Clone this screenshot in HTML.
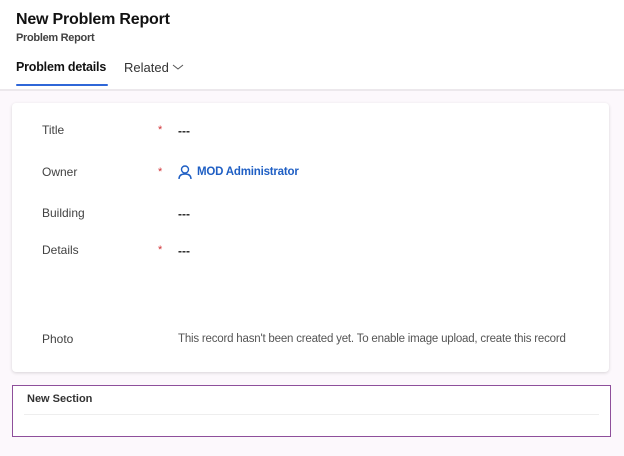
<!DOCTYPE html>
<html><head><style>
body{margin:0;width:624px;height:456px;background:#fcf8fc;font-family:"Liberation Sans",sans-serif;position:relative;overflow:hidden;color:#242424}
.hdr{position:absolute;left:0;top:0;width:624px;height:89px;background:#fff;border-bottom:2px solid #ece8ec}
.a{position:absolute;white-space:nowrap}
.lbl{font-size:12px;color:#424242}
.star{color:#d13438;font-size:11px}
.val{font-size:12px;font-weight:bold;color:#242424}
</style></head><body>
<div class="hdr"></div>
<div class="a" style="left:16px;top:11px;font-size:16px;font-weight:bold;color:#111;letter-spacing:-0.2px">New Problem Report</div>
<div class="a" style="left:16px;top:32px;font-size:11px;font-weight:bold;color:#424242;letter-spacing:-0.3px">Problem Report</div>
<div class="a" style="left:16px;top:60px;font-size:12.5px;font-weight:bold;color:#111;letter-spacing:-0.2px">Problem details</div>
<div class="a" style="left:16px;top:84px;width:92px;height:2px;background:#2f67d8;border-radius:1px"></div>
<div class="a" style="left:124px;top:60px;font-size:13px;color:#333">Related</div>
<svg class="a" style="left:172px;top:63px" width="12" height="8"><path d="M1 2l5 4 5-4" stroke="#555" fill="none"/></svg>
<div class="a" style="left:12px;top:103px;width:597px;height:269px;background:#fff;border-radius:4px;box-shadow:0 1px 3px rgba(0,0,0,.15)"></div>
<div class="a lbl" style="left:42px;top:123px">Title</div>
<div class="a star" style="left:158px;top:124px">*</div>
<div class="a val" style="left:178px;top:124px">---</div>
<div class="a lbl" style="left:42px;top:165px">Owner</div>
<div class="a star" style="left:158px;top:166px">*</div>
<svg class="a" style="left:178px;top:165px" width="14" height="15"><circle cx="7" cy="4.5" r="3.5" stroke="#1f5fc4" stroke-width="1.4" fill="none"/><path d="M1 14c0-4 3-5 6-5s6 1 6 5" stroke="#1f5fc4" stroke-width="1.4" fill="none"/></svg>
<div class="a val" style="left:197px;top:166px;color:#1f5fc4;font-size:11.5px;letter-spacing:-0.2px">MOD Administrator</div>
<div class="a lbl" style="left:42px;top:206px">Building</div>
<div class="a val" style="left:178px;top:207px">---</div>
<div class="a lbl" style="left:42px;top:243px">Details</div>
<div class="a star" style="left:158px;top:244px">*</div>
<div class="a val" style="left:178px;top:244px">---</div>
<div class="a lbl" style="left:42px;top:332px">Photo</div>
<div class="a" style="left:178px;top:333px;font-size:11.5px;color:#555;letter-spacing:-0.2px">This record hasn't been created yet. To enable image upload, create this record</div>
<div class="a" style="left:12px;top:385px;width:597px;height:50px;background:#fff;border:1px solid #8e4f9b"></div>
<div class="a" style="left:27px;top:393px;font-size:11px;font-weight:bold;color:#333">New Section</div>
<div class="a" style="left:24px;top:414px;width:575px;height:1px;background:#eee"></div>
</body></html>
